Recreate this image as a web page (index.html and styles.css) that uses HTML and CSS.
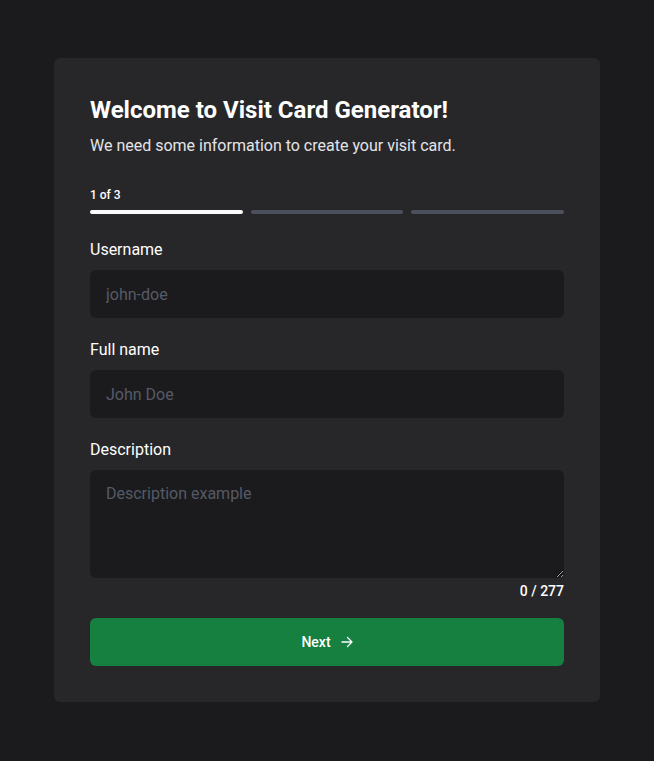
FILE: index.html
```html
<!DOCTYPE html>
<html lang="en">
<head>
<meta charset="utf-8">
<title>Visit Card Generator</title>
<link rel="stylesheet" href="styles.css">
</head>
<body>
<main class="card">
  <h1 class="title">Welcome to Visit Card Generator!</h1>
  <p class="subtitle">We need some information to create your visit card.</p>
  <div class="step">1 of 3</div>
  <div class="progress">
    <span class="bar bar-active"></span>
    <span class="bar"></span>
    <span class="bar"></span>
  </div>
  <form class="form">
    <label class="field">
      <span class="label">Username</span>
      <input class="input" type="text" placeholder="john-doe">
    </label>
    <label class="field">
      <span class="label">Full name</span>
      <input class="input" type="text" placeholder="John Doe">
    </label>
    <label class="field field-desc">
      <span class="label">Description</span>
      <textarea class="input textarea" placeholder="Description example"></textarea>
    </label>
    <div class="counter">0 / 277</div>
    <button class="btn" type="button">Next
      <svg class="arrow" width="12" height="12" viewBox="0 0 12 12" fill="none" stroke="currentColor" stroke-width="1.3" stroke-linecap="round" stroke-linejoin="round"><path d="M1 6h10M6.5 1.5L11 6l-4.5 4.5"/></svg>
    </button>
  </form>
</main>
</body>
</html>
```
FILE: styles.css
```css
* { box-sizing: border-box; }
html, body { margin: 0; }
body {
  background: #1b1b1d;
  font-family: Roboto, "Noto Sans", sans-serif;
  color: #fff;
  min-height: 761px;
  padding-top: 58px;
}
.card {
  width: 546px;
  margin: 0 auto;
  background: #27272a;
  border-radius: 6px;
  padding: 36px 36px 36px;
}
.title {
  margin: 0;
  font-size: 24px;
  line-height: 32px;
  font-weight: 700;
}
.subtitle {
  margin: 8px 0 0;
  font-size: 16px;
  line-height: 24px;
  color: #e4e4e7;
}
.step {
  margin-top: 29px;
  font-size: 12px;
  line-height: 16px;
  font-weight: 500;
}
.progress {
  margin-top: 7px;
  display: flex;
  gap: 8px;
}
.bar {
  flex: 1;
  height: 4px;
  border-radius: 2px;
  background: #4b505b;
}
.bar-active { background: #fafafa; }
.form {
  display: flex;
  flex-direction: column;
  margin-top: 24px;
}
.field {
  display: flex;
  flex-direction: column;
  gap: 8px;
}
.field + .field { margin-top: 20px; }
.label {
  font-size: 16px;
  line-height: 24px;
  font-weight: 400;
}
.input {
  height: 48px;
  border: none;
  border-radius: 6px;
  background: #1b1b1d;
  color: #fff;
  font-family: inherit;
  font-size: 16px;
  padding: 0 16px;
  outline: none;
}
.input::placeholder { color: #565a66; }
.textarea {
  height: 108px;
  padding: 12px 16px;
  resize: vertical;
  line-height: 24px;
}
.counter {
  margin-top: 3px;
  text-align: right;
  font-size: 14px;
  line-height: 20px;
  font-weight: 500;
}
.btn {
  margin-top: 17px;
  height: 48px;
  border: none;
  border-radius: 6px;
  background: #168040;
  color: #fff;
  font-family: inherit;
  font-size: 14px;
  font-weight: 500;
  display: flex;
  align-items: center;
  justify-content: center;
  gap: 10px;
}
.arrow { display: block; }
```
